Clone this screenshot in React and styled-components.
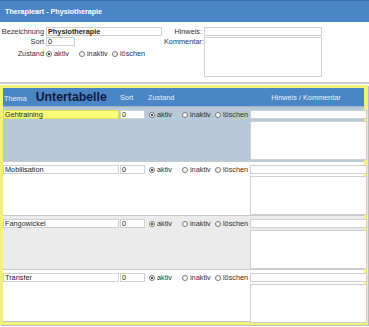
import React from "react";
import styled, { createGlobalStyle } from "styled-components";

const GlobalStyle = createGlobalStyle`
  html, body {
    margin: 0;
    padding: 0;
    background: #ffffff;
  }
  body {
    font-family: "Liberation Sans", Arial, sans-serif;
    font-size: 7.3px;
    color: #222;
  }
`;

const Page = styled.div`
  width: 369px;
  height: 327px;
  overflow: hidden;
  display: flex;
  flex-direction: column;
  background: #fff;
`;

const TitleBar = styled.div`
  height: 21px;
  flex: none;
  border-top: 1px solid #3a6fa8;
  background: #4a86c6;
  color: #fff;
  font-weight: bold;
  font-size: 7.2px;
  display: flex;
  align-items: center;
  padding-left: 5px;
`;

const Form = styled.div`
  display: flex;
  padding-top: 5px;
  border-bottom: 2px solid #c8c8c8;
  box-sizing: border-box;
  height: 62px;
  flex: none;
`;

const FormCol = styled.div`
  display: flex;
  flex-direction: column;
  gap: 1px;
  width: ${(p) => p.$w}px;
`;

const FieldRow = styled.div`
  display: flex;
  align-items: ${(p) => (p.$top ? "flex-start" : "center")};
  height: ${(p) => p.$h || 9}px;
  margin-top: ${(p) => p.$mt || 0}px;
`;

const Label = styled.div`
  width: ${(p) => p.$w}px;
  text-align: right;
  padding-right: 2px;
  box-sizing: border-box;
  color: #333;
  line-height: 9px;
`;

const TextBox = styled.div`
  width: ${(p) => p.$w}px;
  height: ${(p) => p.$h || 9}px;
  border: 1px solid ${(p) => p.$border || "#d0d0d0"};
  background: ${(p) => p.$bg || "#fff"};
  box-sizing: border-box;
  font-size: 7.3px;
  line-height: 7px;
  padding-left: 1px;
  font-weight: ${(p) => (p.$bold ? "bold" : "normal")};
  white-space: nowrap;
  color: #222;
`;

const RadioGroup = styled.div`
  display: flex;
  align-items: center;
  height: 9px;
`;

const RadioItem = styled.div`
  display: flex;
  align-items: center;
  gap: 2px;
  width: ${(p) => p.$w}px;
  color: #333;
  white-space: nowrap;
`;

const RadioCircle = styled.span`
  flex: none;
  width: 6px;
  height: 6px;
  border-radius: 50%;
  border: 1px solid #777;
  background: #fff;
  box-sizing: border-box;
  display: flex;
  align-items: center;
  justify-content: center;

  &::after {
    content: "";
    width: 2px;
    height: 2px;
    border-radius: 50%;
    background: ${(p) => (p.$checked ? "#111" : "transparent")};
  }
`;

const SubTable = styled.div`
  margin-top: 1px;
  height: 240px;
  flex: none;
  border: 3px solid #f2f27a;
  border-right-width: 4px;
  box-sizing: border-box;
  display: flex;
  flex-direction: column;
  width: 368px;
  box-shadow: 1px 1px 0 #bdbdbd;
`;

const GRID = "116px 28px 101px 1fr";

const HeadRow = styled.div`
  display: grid;
  grid-template-columns: ${GRID};
  align-items: center;
  height: 19px;
  flex: none;
  background: #4a86c6;
  color: #e8f0fa;
  border-bottom: 1px solid #9fb3c8;
  box-sizing: border-box;
`;

const HeadCell = styled.div`
  padding-left: ${(p) => p.$pl || 0}px;
  display: flex;
  align-items: baseline;
  justify-content: ${(p) => (p.$center ? "center" : "flex-start")};
`;

const BigTitle = styled.span`
  font-size: 12.3px;
  font-weight: bold;
  color: #0d1b3e;
  margin-left: 9px;
`;

const Row = styled.div`
  display: grid;
  grid-template-columns: ${GRID};
  height: ${(p) => p.$h}px;
  flex: none;
  background: ${(p) => p.$bg};
  border-bottom: 1px solid #c8c8c8;
  box-sizing: border-box;
`;

const Cell = styled.div`
  padding-top: 3px;
  padding-left: ${(p) => p.$pl || 0}px;
`;

const NoteCell = styled.div`
  padding: 3px 0 0 2px;
  display: flex;
  flex-direction: column;
  gap: 2px;
`;

const rows = [
  { name: "Gehtraining", bg: "#b8c8d8", highlight: true, h: 55 },
  { name: "Mobilisation", bg: "#ffffff", h: 54 },
  { name: "Fangowickel", bg: "#ebebeb", h: 54 },
  { name: "Transfer", bg: "#ffffff", h: 52 },
];

function Radios({ widths }) {
  return (
    <RadioGroup>
      <RadioItem $w={widths[0]}>
        <RadioCircle $checked />
        aktiv
      </RadioItem>
      <RadioItem $w={widths[1]}>
        <RadioCircle />
        inaktiv
      </RadioItem>
      <RadioItem $w={widths[2]}>
        <RadioCircle />
        löschen
      </RadioItem>
    </RadioGroup>
  );
}

export default function App() {
  return (
    <>
      <GlobalStyle />
      <Page>
        <TitleBar>Therapieart - Physiotherapie</TitleBar>
        <Form>
          <FormCol $w={164}>
            <FieldRow>
              <Label $w={46}>Bezeichnung</Label>
              <TextBox $w={116} $bold>
                Physiotherapie
              </TextBox>
            </FieldRow>
            <FieldRow>
              <Label $w={46}>Sort</Label>
              <TextBox $w={29}>0</TextBox>
            </FieldRow>
            <FieldRow $mt={2}>
              <Label $w={46}>Zustand</Label>
              <Radios widths={[33, 33, 32]} />
            </FieldRow>
          </FormCol>
          <FormCol $w={205}>
            <FieldRow>
              <Label $w={40}>Hinweis:</Label>
              <TextBox $w={118}></TextBox>
            </FieldRow>
            <FieldRow $top $h={40}>
              <Label $w={40}>Kommentar:</Label>
              <TextBox $w={118} $h={40}></TextBox>
            </FieldRow>
          </FormCol>
        </Form>
        <SubTable>
          <HeadRow>
            <HeadCell $pl={1}>
              Thema
              <BigTitle>Untertabelle</BigTitle>
            </HeadCell>
            <HeadCell $pl={1}>Sort</HeadCell>
            <HeadCell $pl={1}>Zustand</HeadCell>
            <HeadCell $center>Hinweis / Kommentar</HeadCell>
          </HeadRow>
          {rows.map((r) => (
            <Row key={r.name} $bg={r.bg} $h={r.h}>
              <Cell>
                <TextBox
                  $w={116}
                  $bg={r.highlight ? "#fbfb7a" : "#fff"}
                  $border={r.highlight ? "#e0e060" : "#d0d0d0"}
                >
                  {r.name}
                </TextBox>
              </Cell>
              <Cell $pl={1}>
                <TextBox $w={25}>0</TextBox>
              </Cell>
              <Cell $pl={2}>
                <Radios widths={[33, 33, 33]} />
              </Cell>
              <NoteCell>
                <TextBox $w={117}></TextBox>
                <TextBox $w={117} $h={39}></TextBox>
              </NoteCell>
            </Row>
          ))}
        </SubTable>
      </Page>
    </>
  );
}
